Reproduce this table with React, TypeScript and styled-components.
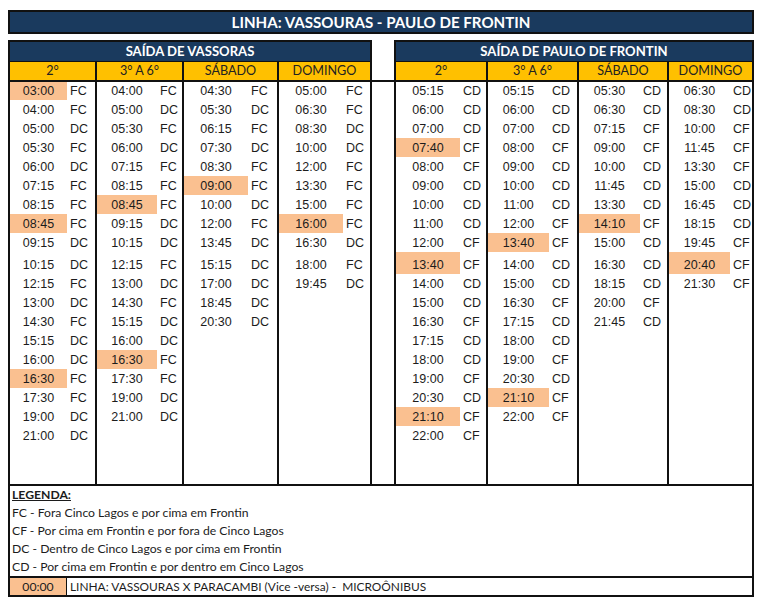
import React from 'react';
import styled, { createGlobalStyle } from 'styled-components';

const NAVY = '#1a3a5e';
const YELLOW = '#FFC000';
const PEACH = '#FAC090';
const LINE = '#111111';
const INK = '#1c1c1c';
const HUMANIST = 'Lato, "Open Sans", sans-serif';
const ARIAL = '"Liberation Sans", Arial, sans-serif';

const GlobalStyle = createGlobalStyle`
  html, body { margin: 0; padding: 0; background: #ffffff; }
  body { font-family: ${HUMANIST}; color: ${INK}; }
  * { box-sizing: border-box; }
`;

type Entry = { t: string; c: string; hl?: boolean };
type Day = { label: string; width: number; timeW: number; entries: Entry[] };

const e = (t: string, c: string, hl = false): Entry => ({ t, c, hl });

const vassoras: Day[] = [
  {
    label: '2°', width: 85, timeW: 57,
    entries: [
      e('03:00', 'FC', true), e('04:00', 'FC'), e('05:00', 'DC'), e('05:30', 'FC'), e('06:00', 'DC'),
      e('07:15', 'FC'), e('08:15', 'FC'), e('08:45', 'FC', true), e('09:15', 'DC'), e('10:15', 'DC'),
      e('12:15', 'FC'), e('13:00', 'DC'), e('14:30', 'FC'), e('15:15', 'DC'), e('16:00', 'DC'),
      e('16:30', 'FC', true), e('17:30', 'FC'), e('19:00', 'DC'), e('21:00', 'DC'),
    ],
  },
  {
    label: '3° A 6°', width: 85, timeW: 60,
    entries: [
      e('04:00', 'FC'), e('05:00', 'DC'), e('05:30', 'FC'), e('06:00', 'DC'), e('07:15', 'FC'),
      e('08:15', 'FC'), e('08:45', 'FC', true), e('09:15', 'DC'), e('10:15', 'DC'), e('12:15', 'FC'),
      e('13:00', 'DC'), e('14:30', 'FC'), e('15:15', 'DC'), e('16:00', 'DC'), e('16:30', 'FC', true),
      e('17:30', 'FC'), e('19:00', 'DC'), e('21:00', 'DC'),
    ],
  },
  {
    label: 'SÁBADO', width: 93, timeW: 64,
    entries: [
      e('04:30', 'FC'), e('05:30', 'DC'), e('06:15', 'FC'), e('07:30', 'DC'), e('08:30', 'FC'),
      e('09:00', 'FC', true), e('10:00', 'DC'), e('12:00', 'FC'), e('13:45', 'DC'), e('15:15', 'DC'),
      e('17:00', 'DC'), e('18:45', 'DC'), e('20:30', 'DC'),
    ],
  },
  {
    label: 'DOMINGO', width: 91, timeW: 64,
    entries: [
      e('05:00', 'FC'), e('06:30', 'FC'), e('08:30', 'DC'), e('10:00', 'DC'), e('12:00', 'FC'),
      e('13:30', 'FC'), e('15:00', 'FC'), e('16:00', 'FC', true), e('16:30', 'DC'), e('18:00', 'FC'),
      e('19:45', 'DC'),
    ],
  },
];

const frontin: Day[] = [
  {
    label: '2°', width: 90, timeW: 64,
    entries: [
      e('05:15', 'CD'), e('06:00', 'CD'), e('07:00', 'CD'), e('07:40', 'CF', true), e('08:00', 'CF'),
      e('09:00', 'CD'), e('10:00', 'CD'), e('11:00', 'CD'), e('12:00', 'CF'), e('13:40', 'CF', true),
      e('14:00', 'CD'), e('15:00', 'CD'), e('16:30', 'CF'), e('17:15', 'CD'), e('18:00', 'CD'),
      e('19:00', 'CF'), e('20:30', 'CD'), e('21:10', 'CF', true), e('22:00', 'CF'),
    ],
  },
  {
    label: '3° A 6°', width: 89, timeW: 61,
    entries: [
      e('05:15', 'CD'), e('06:00', 'CD'), e('07:00', 'CD'), e('08:00', 'CF'), e('09:00', 'CD'),
      e('10:00', 'CD'), e('11:00', 'CD'), e('12:00', 'CF'), e('13:40', 'CF', true), e('14:00', 'CD'),
      e('15:00', 'CD'), e('16:30', 'CF'), e('17:15', 'CD'), e('18:00', 'CD'), e('19:00', 'CF'),
      e('20:30', 'CD'), e('21:10', 'CF', true), e('22:00', 'CF'),
    ],
  },
  {
    label: 'SÁBADO', width: 88, timeW: 61,
    entries: [
      e('05:30', 'CD'), e('06:30', 'CD'), e('07:15', 'CF'), e('09:00', 'CF'), e('10:00', 'CD'),
      e('11:45', 'CD'), e('13:30', 'CD'), e('14:10', 'CF', true), e('15:00', 'CD'), e('16:30', 'CD'),
      e('18:15', 'CD'), e('20:00', 'CF'), e('21:45', 'CD'),
    ],
  },
  {
    label: 'DOMINGO', width: 83, timeW: 61,
    entries: [
      e('06:30', 'CD'), e('08:30', 'CD'), e('10:00', 'CF'), e('11:45', 'CF'), e('13:30', 'CF'),
      e('15:00', 'CD'), e('16:45', 'CD'), e('18:15', 'CD'), e('19:45', 'CF'), e('20:40', 'CF', true),
      e('21:30', 'CF'),
    ],
  },
];

const legend = [
  'FC - Fora Cinco Lagos e por cima em Frontin',
  'CF - Por cima em Frontin e por fora de Cinco Lagos',
  'DC - Dentro de Cinco Lagos e por cima em Frontin',
  'CD - Por cima em Frontin e por dentro em Cinco Lagos',
];

const ROWS = '18px repeat(8, 19px) 22px repeat(9, 19px)';

const Page = styled.main`
  width: 754px;
  padding: 10px 0 0 8px;
`;

const TitleBar = styled.h1`
  margin: 0;
  height: 24px;
  background: ${NAVY};
  border: 2px solid ${LINE};
  color: #ffffff;
  font: 700 15.1px/20px ${HUMANIST};
  text-align: center;
`;

const TablesRow = styled.div`
  display: grid;
  grid-template-columns: 364px 22px 360px;
  margin-top: 6px;
`;

const Table = styled.section`
  display: flex;
  flex-direction: column;
  border: 2px solid ${LINE};
  border-bottom: 0;
`;

const SectionHeader = styled.h2`
  margin: 0;
  height: 20px;
  background: ${NAVY};
  border-bottom: 1px solid ${LINE};
  color: #ffffff;
  font: 700 13.1px/19px ${HUMANIST};
  text-align: center;
`;

const DayHeaderRow = styled.div<{ $cols: string }>`
  display: grid;
  grid-template-columns: ${(p) => p.$cols};
  column-gap: 2px;
  height: 18px;
  background: ${LINE};
`;

const DayHeader = styled.div`
  background: ${YELLOW};
  color: #222;
  font: 400 12.6px/18px ${HUMANIST};
  text-align: center;
`;

const Body = styled.div<{ $cols: string }>`
  display: grid;
  grid-template-columns: ${(p) => p.$cols};
  column-gap: 2px;
  height: 404px;
  border-top: 2px solid ${LINE};
  background: ${LINE};
`;

const DayColumn = styled.div<{ $timeW: number }>`
  display: grid;
  grid-template-columns: ${(p) => p.$timeW}px 1fr;
  grid-template-rows: ${ROWS};
  grid-auto-rows: 19px;
  align-content: start;
  background: #ffffff;
`;

const TimeCell = styled.div<{ $hl?: boolean }>`
  display: flex;
  align-items: flex-end;
  justify-content: center;
  background: ${(p) => (p.$hl ? PEACH : 'transparent')};
  font: 400 12.5px/18px ${ARIAL};
  color: ${INK};
`;

const CodeCell = styled.div`
  display: flex;
  align-items: flex-end;
  padding-left: 3px;
  font: 400 12.5px/18px ${ARIAL};
  color: ${INK};
`;

const GapColumn = styled.div`
  margin-top: 40px;
  border-top: 2px solid ${LINE};
`;

const Legend = styled.footer`
  border: 2px solid ${LINE};
`;

const LegendTitle = styled.div`
  height: 18px;
  padding-left: 2px;
  font: 700 12.2px/18px ${HUMANIST};
  text-decoration: underline;
  color: ${INK};
`;

const LegendItem = styled.div`
  height: 18px;
  padding-left: 2px;
  font: 400 12.2px/18px ${HUMANIST};
  color: ${INK};
`;

const NoteRow = styled.div`
  display: grid;
  grid-template-columns: 57px 1fr;
  height: 19px;
  border-top: 2px solid ${LINE};
`;

const NoteSwatch = styled.div`
  background: ${PEACH};
  border-right: 1.5px solid ${LINE};
  text-align: center;
  font: 400 12.2px/17px ${HUMANIST};
  color: ${INK};
`;

const NoteText = styled.div`
  padding-left: 3px;
  white-space: pre;
  font: 400 11.9px/17px ${HUMANIST};
  color: ${INK};
`;

function Schedule({ title, days }: { title: string; days: Day[] }) {
  const cols = days.map((d) => `${d.width}px`).join(' ');
  return (
    <Table>
      <SectionHeader>{title}</SectionHeader>
      <DayHeaderRow $cols={cols}>
        {days.map((d) => (
          <DayHeader key={d.label}>{d.label}</DayHeader>
        ))}
      </DayHeaderRow>
      <Body $cols={cols}>
        {days.map((d) => (
          <DayColumn key={d.label} $timeW={d.timeW}>
            {d.entries.map((en, i) => (
              <React.Fragment key={i}>
                <TimeCell $hl={en.hl}>{en.t}</TimeCell>
                <CodeCell>{en.c}</CodeCell>
              </React.Fragment>
            ))}
          </DayColumn>
        ))}
      </Body>
    </Table>
  );
}

export default function App() {
  return (
    <Page>
      <GlobalStyle />
      <TitleBar>LINHA: VASSOURAS - PAULO DE FRONTIN</TitleBar>
      <TablesRow>
        <Schedule title="SAÍDA DE VASSORAS" days={vassoras} />
        <GapColumn />
        <Schedule title="SAÍDA DE PAULO DE FRONTIN" days={frontin} />
      </TablesRow>
      <Legend>
        <LegendTitle>LEGENDA:</LegendTitle>
        {legend.map((l) => (
          <LegendItem key={l}>{l}</LegendItem>
        ))}
        <NoteRow>
          <NoteSwatch>00:00</NoteSwatch>
          <NoteText>{'LINHA: VASSOURAS X PARACAMBI (Vice -versa) -  MICROÔNIBUS'}</NoteText>
        </NoteRow>
      </Legend>
    </Page>
  );
}
